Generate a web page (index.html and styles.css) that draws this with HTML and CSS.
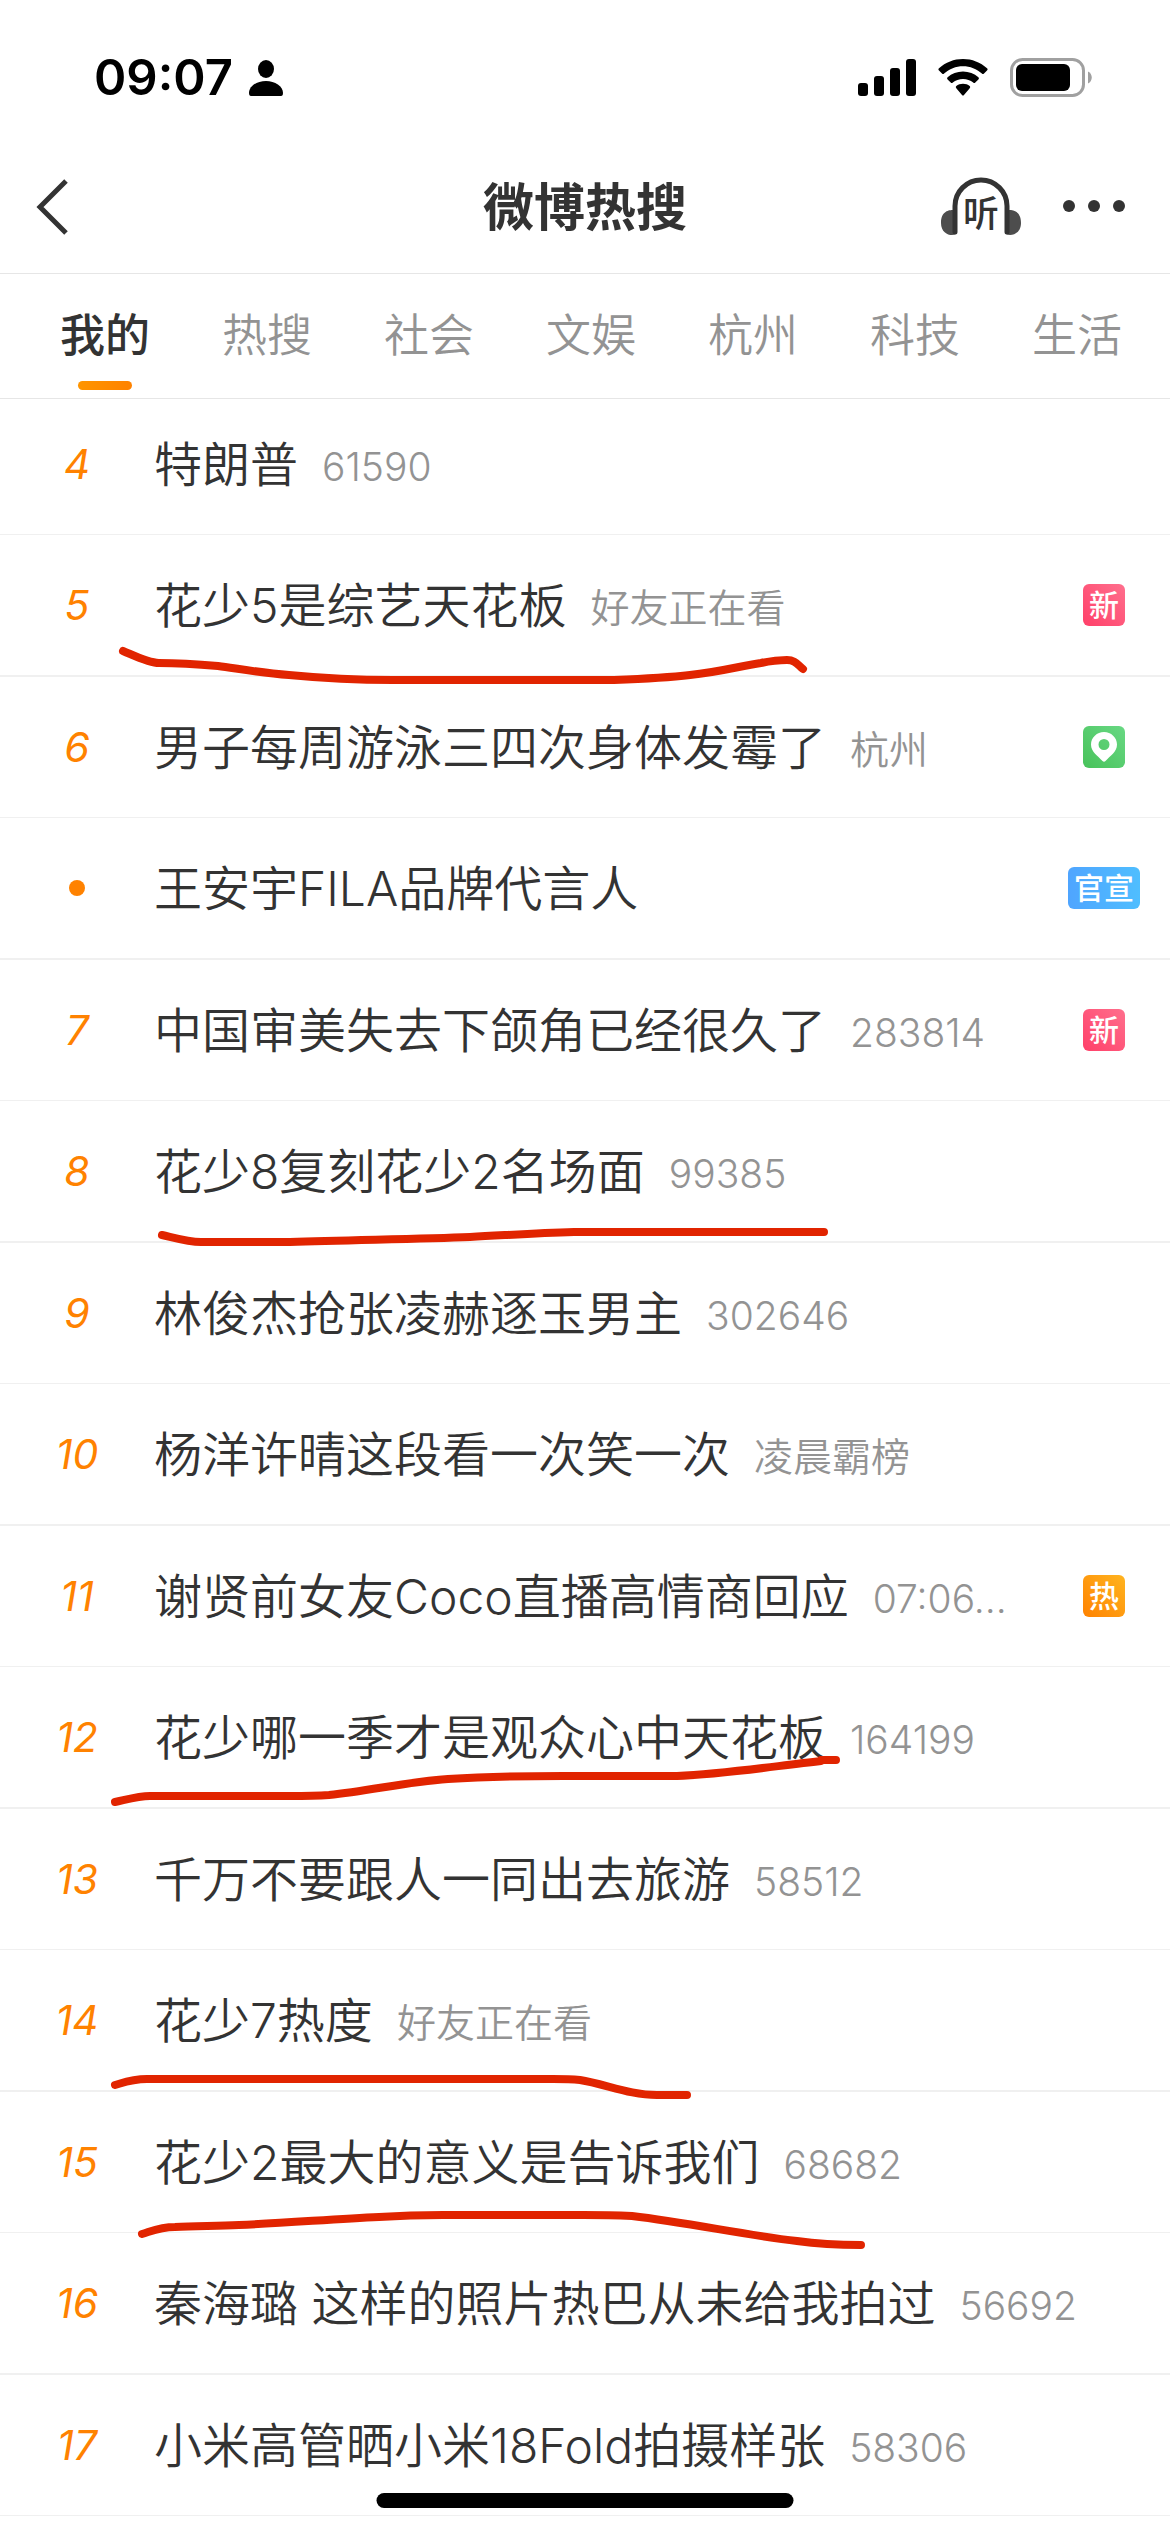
FILE: index.html
```html
<!DOCTYPE html>
<html lang="zh-CN">
<head>
  <meta charset="UTF-8">
  <meta name="viewport" content="width=device-width, initial-scale=1.0">
  <title>微博热搜</title>
  <link rel="stylesheet" href="styles.css">
</head>
<body>
  <div class="top">
    <div class="status-bar">
      <div class="status-left">
        <span class="time">09:07</span>
        <svg width="34" height="36" viewBox="0 0 34 36">
          <ellipse cx="17" cy="9" rx="8" ry="9" />
          <path d="M2 36Q0 36 0 33C0 26 8 21 17 21S34 26 34 33Q34 36 32 36Z" />
        </svg>
      </div>
      <div class="status-right">
        <svg width="58" height="38" viewBox="0 0 58 38">
          <rect x="0" y="24" width="10" height="13" rx="3" />
          <rect x="16" y="17" width="10" height="20" rx="3" />
          <rect x="32" y="9" width="10" height="28" rx="3" />
          <rect x="48" y="0" width="10" height="37" rx="3" />
        </svg>
        <svg width="50" height="38" viewBox="0 0 50 38">
          <path d="M1 11.5a1.5 1.5 0 0 1 0-2.2C7.500 3.300 16 0 25 0s17.500 3.300 24 9.300a1.500 1.500 0 0 1 0 2.200L46 14.600a1.500 1.500 0 0 1-2.100 0C38.800 9.900 32.100 7.300 25 7.300S11.200 9.900 6.100 14.600a1.500 1.500 0 0 1-2.100 0Z" />
          <path d="M9.600 20.400a1.500 1.500 0 0 1 0-2.200C13.700 14.600 19.100 12.500 25 12.500s11.300 2.100 15.400 5.700a1.500 1.500 0 0 1 0 2.200l-3.100 3.200a1.500 1.500 0 0 1-2.100 0C32.400 21.300 28.900 20 25 20s-7.400 1.300-10.200 3.600a1.500 1.500 0 0 1-2.100 0Z" />
          <path d="M18.300 29.200a1.500 1.500 0 0 1 0-2.200C20.100 25.500 22.400 24.700 25 24.700s4.900.8 6.700 2.300a1.500 1.500 0 0 1 0 2.200L26 35.900a1.400 1.400 0 0 1-2 0Z" />
        </svg>
        <svg width="82" height="40" viewBox="0 0 82 40">
          <rect class="battery-case" x="1.500" y="1.500" width="72" height="36" rx="11" />
          <rect x="6" y="6" width="54" height="27" rx="6" />
          <path class="battery-tip" d="M78 13.500C83 15.500 83 23.500 78 25.500Z" />
        </svg>
      </div>
    </div>

    <header class="header">
      <button class="icon-button" aria-label="返回">
        <svg width="36" height="58" viewBox="0 0 36 58">
          <path class="line" d="M33 3L7 29L33 55" />
        </svg>
      </button>
      <h1>微博热搜</h1>
      <div class="actions">
        <button class="icon-button" aria-label="听热搜">
          <svg width="80" height="60" viewBox="0 0 80 60">
            <path class="cup" d="M16 55C16 60 0 60 0 46S11 33 13 33H16Z" />
            <path class="cup" d="M64 55C64 60 80 60 80 46S69 33 67 33H64Z" />
            <path class="line round" d="M14 55V29A26 26 0 0 1 66 29V55" />
            <text x="40" y="50" text-anchor="middle">听</text>
          </svg>
        </button>
        <button class="icon-button" aria-label="更多">
          <svg width="64" height="60" viewBox="0 0 64 60">
            <circle cx="7" cy="29" r="6" />
            <circle cx="32" cy="29" r="6" />
            <circle cx="57" cy="29" r="6" />
          </svg>
        </button>
      </div>
    </header>

    <nav class="tabs">
      <a class="active" href="#mine">我的</a>
      <a href="#hot">热搜</a>
      <a href="#society">社会</a>
      <a href="#ent">文娱</a>
      <a href="#hangzhou">杭州</a>
      <a href="#tech">科技</a>
      <a href="#life">生活</a>
    </nav>
  </div>

  <ul class="list">
    <li><span class="rank">4</span><a class="topic" href="#">特朗普</a><span class="note">61590</span></li>
    <li><span class="rank">5</span><a class="topic" href="#">花少5是综艺天花板</a><span class="note">好友正在看</span><span class="tag"><b class="badge new">新</b></span></li>
    <li>
      <span class="rank">6</span><a class="topic" href="#">男子每周游泳三四次身体发霉了</a><span class="note">杭州</span>
      <span class="tag"><b class="badge place">
        <svg width="26" height="30" viewBox="0 0 26 30">
          <path fill-rule="evenodd" d="M13 0C20 0 26 5.500 26 12.500C26 20 19 24 14.500 29Q13 30.500 11.500 29C7 24 0 20 0 12.500C0 5.500 6 0 13 0ZM13 7A5.500 5.500 0 1 0 13 18A5.500 5.500 0 1 0 13 7Z" />
        </svg>
      </b></span>
    </li>
    <li><span class="rank"><i class="dot"></i></span><a class="topic" href="#">王安宇FILA品牌代言人</a><span class="tag"><b class="badge official">官宣</b></span></li>
    <li><span class="rank">7</span><a class="topic" href="#">中国审美失去下颌角已经很久了</a><span class="note">283814</span><span class="tag"><b class="badge new">新</b></span></li>
    <li><span class="rank">8</span><a class="topic" href="#">花少8复刻花少2名场面</a><span class="note">99385</span></li>
    <li><span class="rank">9</span><a class="topic" href="#">林俊杰抢张凌赫逐玉男主</a><span class="note">302646</span></li>
    <li><span class="rank">10</span><a class="topic" href="#">杨洋许晴这段看一次笑一次</a><span class="note">凌晨霸榜</span></li>
    <li><span class="rank">11</span><a class="topic" href="#">谢贤前女友Coco直播高情商回应</a><span class="note">07:06…</span><span class="tag"><b class="badge hot">热</b></span></li>
    <li><span class="rank">12</span><a class="topic" href="#">花少哪一季才是观众心中天花板</a><span class="note">164199</span></li>
    <li><span class="rank">13</span><a class="topic" href="#">千万不要跟人一同出去旅游</a><span class="note">58512</span></li>
    <li><span class="rank">14</span><a class="topic" href="#">花少7热度</a><span class="note">好友正在看</span></li>
    <li><span class="rank">15</span><a class="topic" href="#">花少2最大的意义是告诉我们</a><span class="note">68682</span></li>
    <li><span class="rank">16</span><a class="topic" href="#">秦海璐 这样的照片热巴从未给我拍过</a><span class="note">56692</span></li>
    <li><span class="rank">17</span><a class="topic" href="#">小米高管晒小米18Fold拍摄样张</a><span class="note">58306</span></li>
  </ul>

  <!-- red pen marks over the list -->
  <svg class="marks" width="1170" height="2532" viewBox="0 0 1170 2532">
    <path d="M123 651C135 656 149 663 159 663C180 663 195 664 218 666C240 669 262 673 289 675C320 678 355 680 393 680H614C640 679 665 678 690 675C720 672 740 666 761 663Q775 660 787 660C795 660 797 664 803 669" />
    <path d="M162 1235C175 1238 188 1242 201 1242H290C350 1240 420 1239 470 1237C510 1235 535 1233 574 1232H824" />
    <path d="M115 1802C125 1800 138 1796 150 1796H289Q315 1796 329 1795C370 1791 405 1782 448 1779C480 1777 520 1776 563 1776H677C725 1774 775 1766 821 1761M821 1760H836" />
    <path d="M115 2085C125 2082 132 2079 147 2079H553Q570 2079 580 2080C605 2084 630 2095 657 2095H687" />
    <path d="M142 2234C152 2231 160 2227 175 2227C195 2226 215 2226 239 2225C285 2223 335 2219 379 2217Q410 2215 443 2215H583Q610 2215 632 2216C690 2223 745 2235 797 2241Q825 2245 861 2245" />
  </svg>

  <div class="home-indicator"></div>
</body>
</html>
```
FILE: styles.css
```css
* {
  box-sizing: border-box;
}

body {
  position: relative;
  margin: 0;
  background-color: #fff;
  color: #333;
  font-family: Inter, "Noto Sans CJK SC", sans-serif;
}

a {
  color: inherit;
  text-decoration: none;
}

svg {
  display: block;
}

.top {
  position: relative;
  background-color: #fff;
}

.status-bar {
  display: flex;
  justify-content: space-between;
  align-items: center;
  height: 141px;
  padding: 15px 78px 0 94px;
  color: #000;
}

.status-left {
  display: flex;
  align-items: center;
  gap: 16px;
}

.time {
  font-size: 49px;
  font-weight: 600;
  line-height: 60px;
}

.status-right {
  display: flex;
  align-items: center;
  gap: 22px;
}

.battery-case {
  fill: none;
  stroke: #a0a0a0;
  stroke-width: 3;
}

.battery-tip {
  fill: #a0a0a0;
}

.header {
  display: grid;
  grid-template-columns: 1fr auto 1fr;
  align-items: center;
  height: 133px;
  padding: 0 33px;
  border-bottom: 1px solid #e6e6e6;
}

.header h1 {
  margin: 0;
  padding-top: 2px;
  font-size: 51px;
  font-weight: 700;
  line-height: 60px;
}

.icon-button {
  width: fit-content;
  padding: 0;
  border: none;
  background: none;
  color: #333;
  fill: #333;
  cursor: pointer;
}

.line {
  fill: none;
  stroke: #333;
  stroke-width: 5;
}

.round {
  stroke-linecap: round;
}

.cup {
  fill: #4d4d4d;
}

.header text {
  font-family: "Noto Sans CJK SC", sans-serif;
  font-size: 36px;
  font-weight: 500;
}

.actions {
  display: flex;
  justify-content: flex-end;
  gap: 41px;
  padding-right: 11px;
}

.tabs {
  display: flex;
  justify-content: space-between;
  height: 125px;
  padding: 0 48px 0 60px;
  border-bottom: 1px solid #e6e6e6;
}

.tabs a {
  display: flex;
  flex-direction: column;
  align-items: center;
  padding-top: 32px;
  color: #939393;
  font-size: 45px;
  font-weight: 350;
  line-height: 60px;
}

.tabs .active {
  color: #333;
  font-weight: 500;
}

.tabs .active::after {
  content: "";
  width: 54px;
  height: 9px;
  margin-top: 15px;
  border-radius: 5px;
  background: linear-gradient(to right, #ff9500, #ff8200);
}

/* scrolled a little under the tabs */
.list {
  margin: -5px 0 0;
  padding: 0 0 16px;
  list-style: none;
}

.list li {
  display: flex;
  align-items: center;
  height: 141px;
  padding-right: 30px;
  border-bottom: 1px solid #f0f0f0;
}

.list li:nth-child(even) {
  height: 142px;
  border-bottom-width: 2px;
}

.rank {
  display: flex;
  flex: none;
  justify-content: center;
  width: 154px;
  color: #ff8200;
  font-size: 41px;
  font-style: italic;
  line-height: 60px;
}

.dot {
  width: 16px;
  height: 16px;
  border-radius: 50%;
  background-color: #ff8200;
}

.topic {
  padding-top: 2px;
  font-size: 48px;
  font-weight: 350;
  line-height: 60px;
  white-space: nowrap;
}

.note {
  margin-left: 24px;
  padding-top: 5px;
  color: #939393;
  font-size: 39px;
  font-weight: 350;
  line-height: 60px;
  white-space: nowrap;
}

.tag {
  display: flex;
  justify-content: center;
  width: 72px;
  margin-left: auto;
}

.badge {
  display: flex;
  align-items: center;
  justify-content: center;
  min-width: 42px;
  height: 42px;
  padding: 0 6px;
  border-radius: 6px;
  color: #fff;
  fill: #fff;
  font-size: 30px;
  font-weight: 500;
  line-height: 42px;
}

.new {
  background: linear-gradient(to top right, #ff4069, #ff6f8d);
}

.place {
  background: linear-gradient(to top right, #48c25a, #68d883);
}

.official {
  background: linear-gradient(to right, #4fa5ff, #4fbeff);
}

.hot {
  background: linear-gradient(to top right, #ff8200, #ffb420);
}

.marks {
  position: absolute;
  top: 0;
  left: 0;
  fill: none;
  stroke: #e12400;
  stroke-width: 8;
  stroke-linecap: round;
  stroke-linejoin: round;
  pointer-events: none;
}

.home-indicator {
  position: absolute;
  bottom: 24px;
  left: 50%;
  width: 417px;
  height: 15px;
  border-radius: 8px;
  background-color: #000;
  transform: translateX(-50%);
}
```
